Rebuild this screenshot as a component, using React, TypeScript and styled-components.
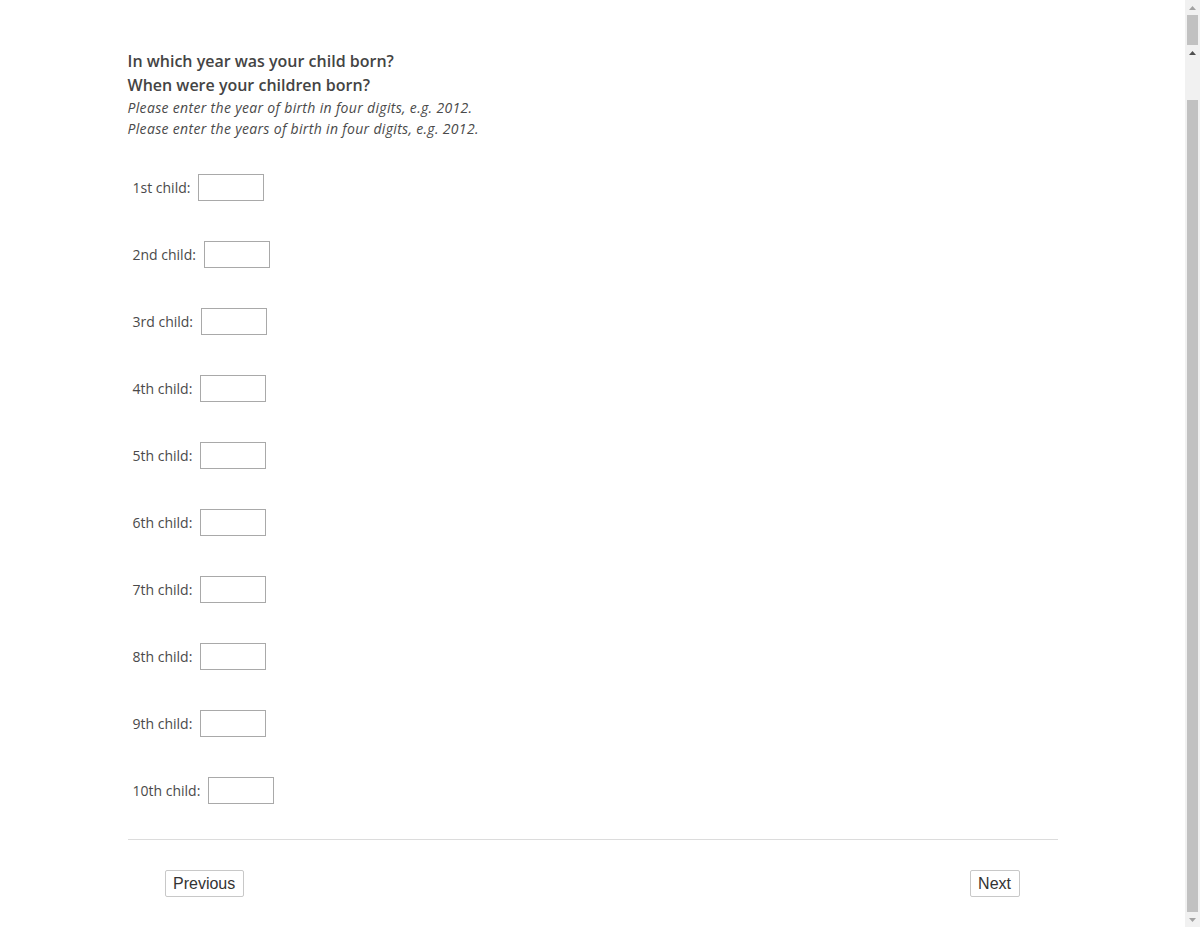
import React from "react";
import styled, { createGlobalStyle } from "styled-components";

const ordinals = [
  "1st",
  "2nd",
  "3rd",
  "4th",
  "5th",
  "6th",
  "7th",
  "8th",
  "9th",
  "10th",
];

const App = () => {
  return (
    <>
      <GlobalStyle />
      <Page>
        <Main>
          <Container>
            <Question>In which year was your child born?</Question>
            <Question>When were your children born?</Question>
            <Hint>Please enter the year of birth in four digits, e.g. 2012.</Hint>
            <Hint>Please enter the years of birth in four digits, e.g. 2012.</Hint>
            <Rows>
              {ordinals.map((o) => (
                <ChildRow key={o}>
                  <Label htmlFor={`child-${o}`}>{o} child:</Label>
                  <YearInput id={`child-${o}`} type="text" />
                </ChildRow>
              ))}
            </Rows>
            <Divider />
            <NavBar>
              <NavButton>Previous</NavButton>
              <NavButton>Next</NavButton>
            </NavBar>
          </Container>
        </Main>
        <Rail>
          <ArrowBox>
            <Arrow $dark={false} />
          </ArrowBox>
          <Thumb $grow={false} />
          <ArrowBox>
            <Arrow $dark />
          </ArrowBox>
          <RailGap />
          <Thumb $grow />
          <ArrowBox>
            <Arrow $dark={false} $down />
          </ArrowBox>
        </Rail>
      </Page>
    </>
  );
};

export default App;

const Arrow = ({ $dark, $down }: { $dark: boolean; $down?: boolean }) => (
  <svg width="7" height="4" viewBox="0 0 7 4">
    <polygon
      points={$down ? "0,0 7,0 3.5,4" : "3.5,0 7,4 0,4"}
      fill={$dark ? "#505050" : "#a3a3a3"}
    />
  </svg>
);

const GlobalStyle = createGlobalStyle`
  html, body {
    margin: 0;
    padding: 0;
    background: #fff;
  }
  body {
    font-family: "Open Sans", "Noto Sans", sans-serif;
    color: #444;
  }
`;

const Page = styled.div`
  display: flex;
  height: 927px;
  overflow: hidden;
`;

const Main = styled.div`
  flex: 1;
  overflow: hidden;
`;

const Container = styled.div`
  width: 930px;
  margin: 0 auto;
  padding-top: 49px;
`;

const Question = styled.div`
  font-size: 16px;
  font-weight: 600;
  line-height: 24px;
  color: #444;
`;

const Hint = styled.div`
  font-size: 14px;
  font-style: italic;
  line-height: 21px;
  letter-spacing: 0.33px;
  color: #4a4a4a;
`;

const Rows = styled.div`
  display: flex;
  flex-direction: column;
  margin-top: 15px;
`;

const ChildRow = styled.div`
  display: flex;
  align-items: center;
  height: 67px;
  padding-left: 5px;
  gap: 8px;
`;

const Label = styled.label`
  font-size: 14px;
  color: #4a4a4a;
`;

const YearInput = styled.input`
  box-sizing: border-box;
  width: 66px;
  height: 27px;
  border: 1px solid #a9a9a9;
  border-radius: 0;
  padding: 2px 4px;
  font-family: "Open Sans", sans-serif;
  font-size: 14px;
  outline: none;
`;

const Divider = styled.hr`
  border: none;
  border-top: 1px solid #dcdcdc;
  margin: 15px 0 0;
`;

const NavBar = styled.div`
  display: flex;
  justify-content: space-between;
  padding: 30px 38px 0 37px;
`;

const NavButton = styled.button`
  box-sizing: border-box;
  height: 27px;
  padding: 1px 7.5px;
  background: #fff;
  border: 1px solid #c8c8c8;
  border-radius: 2px;
  font-family: "Liberation Sans", Arial, sans-serif;
  font-size: 16px;
  color: #333;
  cursor: pointer;
`;

const Rail = styled.div`
  width: 15px;
  background: #f1f1f1;
  display: flex;
  flex-direction: column;
  align-items: center;
`;

const ArrowBox = styled.div`
  width: 15px;
  height: 15px;
  display: flex;
  align-items: center;
  justify-content: center;
`;

const Thumb = styled.div<{ $grow: boolean }>`
  width: 11px;
  background: #c1c1c1;
  height: ${(p) => (p.$grow ? "auto" : "30px")};
  flex: ${(p) => (p.$grow ? "1" : "none")};
`;

const RailGap = styled.div`
  height: 40px;
`;
